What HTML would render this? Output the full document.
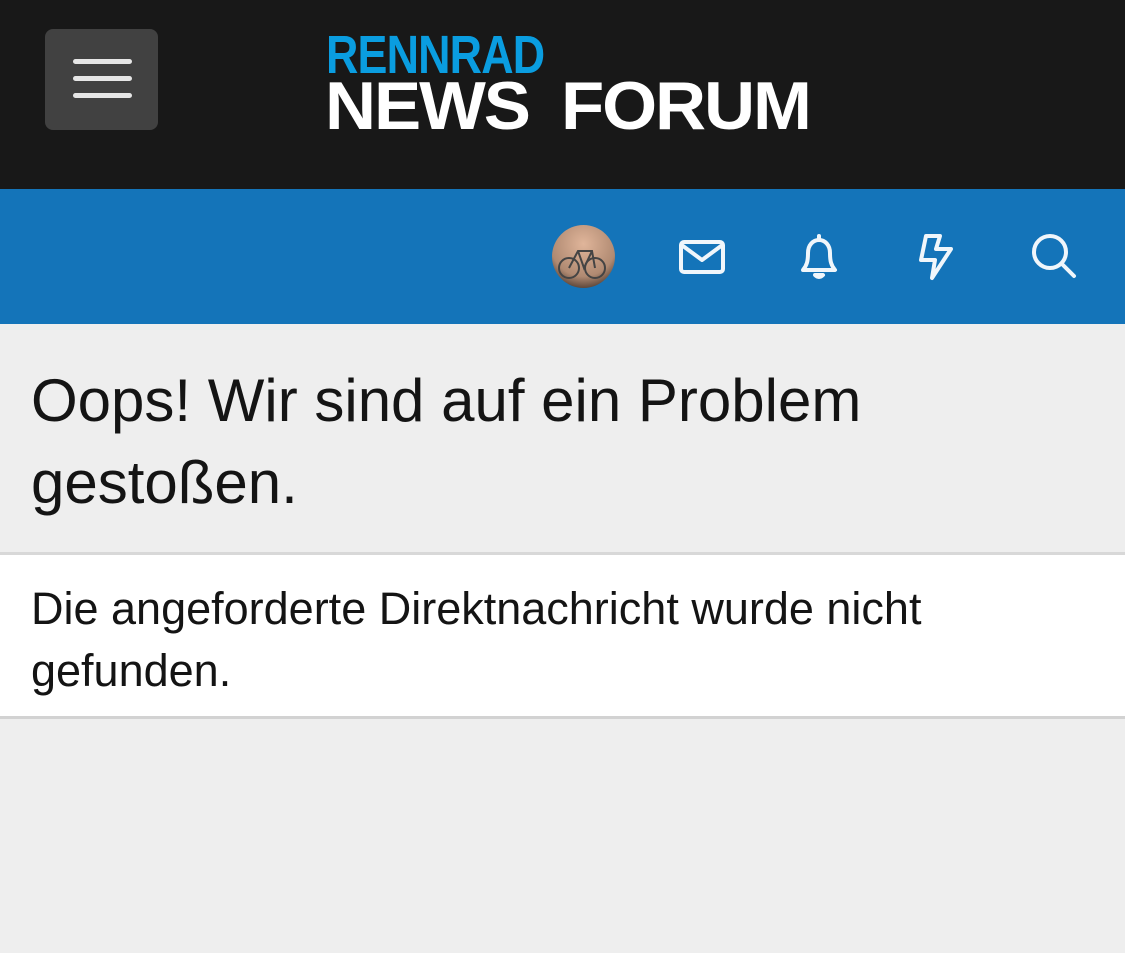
<!DOCTYPE html>
<html><head><meta charset="utf-8"><style>
*{margin:0;padding:0;box-sizing:border-box}
body{width:1125px;height:953px;background:#eeeeee;font-family:"Liberation Sans",sans-serif;overflow:hidden;position:relative}
.hd{position:absolute;left:0;top:0;width:1125px;height:189px;background:#181818}
.burger{position:absolute;left:45px;top:29px;width:113px;height:101px;background:#414141;border-radius:8px}
.burger i{position:absolute;left:28px;width:59px;height:5px;background:#e6e6e6;border-radius:3px}
.l1,.l2{position:absolute;font-weight:bold;white-space:nowrap;transform-origin:0 0;line-height:1}
.l1{left:326px;top:28px;color:#0a9de0;font-size:54px;transform:scaleX(0.83);letter-spacing:-1px}
.l2{left:325px;top:72px;color:#fff;font-size:68px;transform:scaleX(1.04);letter-spacing:-2px;word-spacing:14px}
.nav{position:absolute;left:0;top:189px;width:1125px;height:135px;background:#1474b9}
.av{position:absolute;left:552px;top:225px;width:63px;height:63px;border-radius:50%;background:radial-gradient(circle at 50% 30%,#e0b59a,#b08a72 60%,#2a1e18 95%)}
svg{position:absolute}
h1{position:absolute;left:31px;top:360px;font-weight:normal;font-size:60px;line-height:82px;color:#141414;width:1080px}
.box{position:absolute;left:0;top:552px;width:1125px;height:167px;background:#fff;border-top:3px solid #d8d8d8;border-bottom:3px solid #d2d2d2}
.box p{position:absolute;left:31px;top:23px;font-size:45px;line-height:62px;color:#141414;white-space:nowrap}
</style></head><body>
<div class="hd">
<div class="burger"><i style="top:30px"></i><i style="top:47px"></i><i style="top:64px"></i></div>
<div class="l1">RENNRAD</div>
<div class="l2">NEWS FORUM</div>
</div>
<div class="nav">
<div class="av" style="top:36px"></div>
<svg style="left:548px;top:0" width="70" height="135"><g stroke="#444" stroke-width="2" fill="none"><circle cx="21" cy="79" r="10"/><circle cx="47" cy="79" r="10"/><path d="M21 79 L30 62 L44 62 L47 79 M30 62 L36 79 L44 62"/></g></svg>
<svg style="left:678px;top:50px" width="48" height="36" viewBox="0 0 48 36" fill="none" stroke="#f0f6fb" stroke-width="4" stroke-linejoin="round" stroke-linecap="round"><rect x="3" y="3" width="42" height="30" rx="3"/><path d="M5 7 L24 21 L43 7"/></svg>
<svg style="left:797px;top:44px" width="44" height="48" viewBox="0 0 44 48" fill="none" stroke="#f0f6fb" stroke-width="4" stroke-linejoin="round" stroke-linecap="round"><path d="M22 3 V6 M6 37 C10 32 11 28 11 20 C11 12 16 7 22 7 C28 7 33 12 33 20 C33 28 34 32 38 37 Z"/><path d="M18 42 Q22 46 26 42 Z" fill="#f0f6fb"/></svg>
<svg style="left:916px;top:44px" width="42" height="48" viewBox="0 0 42 48" fill="none" stroke="#f0f6fb" stroke-width="4" stroke-linejoin="round" stroke-linecap="round"><path d="M10 3 H24 L20 16 H35 L16 45 L19 27 H5 Z"/></svg>
<svg style="left:1030px;top:43px" width="50" height="50" viewBox="0 0 50 50" fill="none" stroke="#f0f6fb" stroke-width="4" stroke-linecap="round"><circle cx="20" cy="20" r="16"/><path d="M32 32 L44 44"/></svg>
</div>
<h1>Oops! Wir sind auf ein Problem<br>gestoßen.</h1>
<div class="box"><p>Die angeforderte Direktnachricht wurde nicht<br>gefunden.</p></div>
</body></html>
